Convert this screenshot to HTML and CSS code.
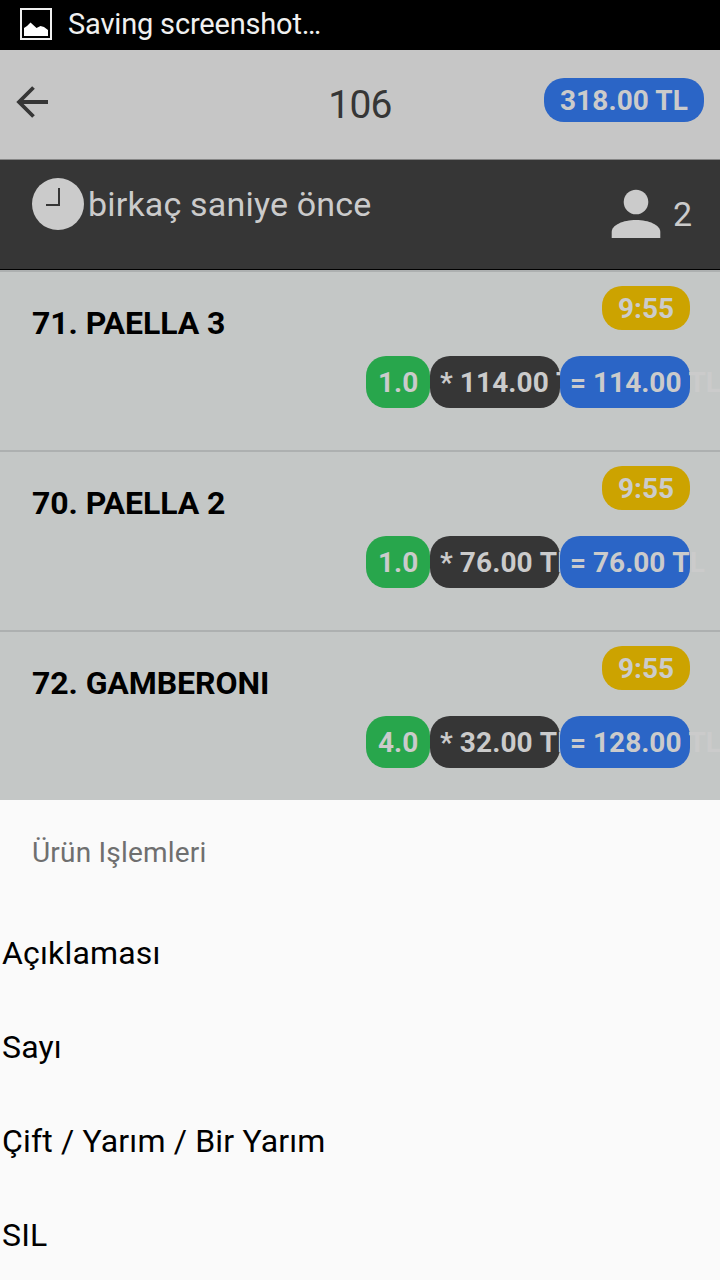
FILE: index.html
```html
<!DOCTYPE html>
<html lang="tr">
<head>
<meta charset="utf-8">
<title>106</title>
<link rel="stylesheet" href="styles.css">
</head>
<body>
<div class="status">
  <svg class="status-icon" width="34" height="34" viewBox="0 0 34 34"><rect x="2" y="2" width="30" height="30" fill="none" stroke="#f0f0f0" stroke-width="2"/><path d="M5 29v-8l3-2 3.500-3.500 6 5.500 4-2 3.500 1L29 23v6z" fill="#fff"/></svg>
  <span class="status-text">Saving screenshot…</span>
</div>
<header class="bar">
  <svg class="back" width="34" height="34" viewBox="0 0 34 34"><path d="M18.500 2.500L4 17l14.500 14.500M3.500 17H33" fill="none" stroke="#363636" stroke-width="3.800"/></svg>
  <h1 class="title">106</h1>
  <span class="badge total">318.00 TL</span>
</header>
<section class="info">
  <svg class="clock" width="52" height="52" viewBox="0 0 52 52"><circle cx="26" cy="26" r="26" fill="#cbcbcb"/><path d="M27 10v17H14" fill="none" stroke="#363636" stroke-width="2"/></svg>
  <span class="ago">birkaç saniye önce</span>
  <svg class="person" width="50" height="50" viewBox="0 0 50 50"><circle cx="25" cy="13" r="12.300" fill="#cbcbcb"/><path d="M.7 49v-6C.7 36 12 31 25 31s24.300 5 24.300 12v6z" fill="#cbcbcb"/></svg>
  <span class="guests">2</span>
</section>
<main class="orders">
  <article class="order">
    <h2 class="name">71. PAELLA 3</h2>
    <div class="side"><span class="badge time">9:55</span>
      <div class="sums"><span class="badge qty">1.0</span><span class="badge price">* 114.00 TL</span><span class="badge sum">= 114.00 TL</span></div></div>
  </article>
  <article class="order">
    <h2 class="name">70. PAELLA 2</h2>
    <div class="side"><span class="badge time">9:55</span>
      <div class="sums"><span class="badge qty">1.0</span><span class="badge price">* 76.00 TL</span><span class="badge sum">= 76.00 TL</span></div></div>
  </article>
  <article class="order">
    <h2 class="name">72. GAMBERONI</h2>
    <div class="side"><span class="badge time">9:55</span>
      <div class="sums"><span class="badge qty">4.0</span><span class="badge price">* 32.00 TL</span><span class="badge sum">= 128.00 TL</span></div></div>
  </article>
</main>
<section class="sheet">
  <h3 class="sheet-title">Ürün Işlemleri</h3>
  <div class="action">Açıklaması</div>
  <div class="action">Sayı</div>
  <div class="action">Çift / Yarım / Bir Yarım</div>
  <div class="action">SIL</div>
</section>
</body>
</html>
```
FILE: styles.css
```css
* { box-sizing: border-box; }
body { margin: 0; width: 720px; height: 1280px; overflow: hidden; display: flex; flex-direction: column; font-family: Roboto, sans-serif; background: #fafafa; }
h1, h2, h3 { margin: 0; }
svg { display: block; flex: none; }
.status { height: 50px; flex: none; background: #000; display: flex; align-items: flex-start; padding: 7px 19px; gap: 15px; }
.status-text { color: #f0f0f0; font-size: 29px; line-height: 34px; letter-spacing: -0.18px; white-space: nowrap; }
.bar { height: 110px; flex: none; background: #c6c6c6; border-bottom: 1px solid #868686; display: grid; grid-template-columns: 1fr auto 1fr; align-items: start; padding: 0 16px; }
.back { margin-top: 35px; margin-left: -1px; }
.title { font-size: 39px; font-weight: 400; line-height: 46px; color: #363636; margin-top: 32px; letter-spacing: -0.8px; }
.badge { font-size: 28px; font-weight: 700; color: #cbcbcb; white-space: nowrap; border-radius: 20px; height: 44px; line-height: 46px; text-align: center; }
.total { justify-self: end; margin-top: 28px; width: 160px; letter-spacing: 0.1px; background: #2b65c6; }
.info { height: 110px; flex: none; background: #363636; border-bottom: 1px solid #000; display: flex; align-items: flex-start; padding: 18px 28px 0 32px; color: #cbcbcb; font-size: 34px; line-height: 40px; }
.ago { margin: 6px 0 0 4px; flex: 1; letter-spacing: 0.18px; }
.person { margin-top: 11px; }
.guests { margin: 16px 0 0 12px; }
.orders { height: 530px; flex: none; overflow: hidden; background: #c4c7c6; }
.order { height: 180px; border-top: 2px solid #adb0b0; display: flex; justify-content: space-between; padding: 14px 30px 0 32px; }
.name { font-size: 32px; font-weight: 700; line-height: 38px; letter-spacing: -0.08px; color: #000; margin-top: 18px; }
.side { display: flex; flex-direction: column; align-items: flex-end; gap: 26px; }
.time { width: 88px; background: #cca300; }
.sums { display: flex; }
.sums .badge { position: relative; height: 52px; line-height: 54px; text-align: left; }
.qty { width: 64px; padding-left: 12px; background: #28a64c; }
.price { width: 130px; padding-left: 10px; letter-spacing: 0.1px; font-kerning: none; background: #363636; }
.sum { width: 130px; padding-left: 10px; font-kerning: none; background: #2b65c6; }
.sheet { flex: 1; background: #fafafa; }
.sheet-title { font-size: 28px; font-weight: 400; line-height: 34px; letter-spacing: 0.2px; color: #6f6f6f; padding: 36px 32px; }
.action { height: 94px; line-height: 94px; font-size: 32px; letter-spacing: 0.17px; padding-left: 2px; color: #000; white-space: nowrap; }
```
